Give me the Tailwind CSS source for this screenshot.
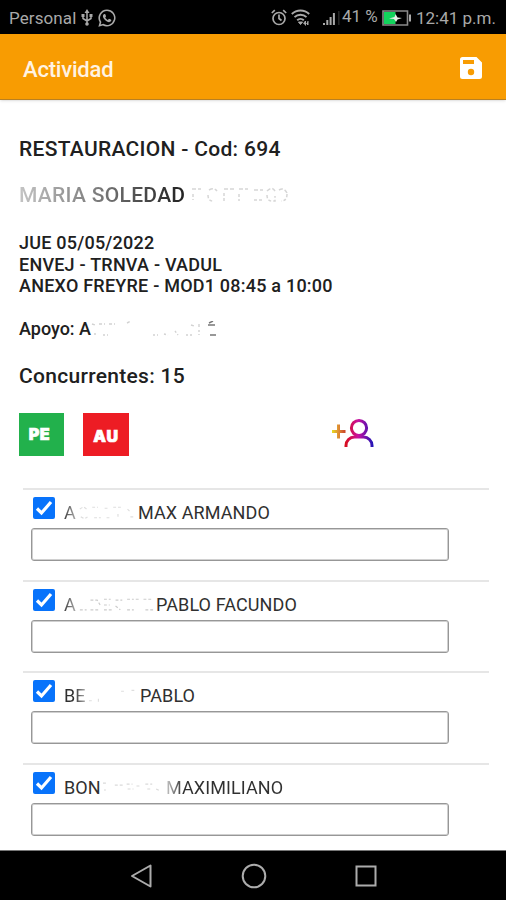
<!DOCTYPE html>
<html lang="es">
<head>
  <meta charset="UTF-8" />
  <meta name="viewport" content="width=device-width, initial-scale=1.0" />
  <title>Actividad</title>
  <script src="https://cdn.jsdelivr.net/npm/@tailwindcss/browser@4"></script>
</head>
<body class="bg-white font-['Roboto',sans-serif] text-[#202020]">
  <div class="w-[506px] h-[900px] flex flex-col overflow-hidden">

    <!-- Barra de estado -->
    <div class="h-[34px] shrink-0 bg-black text-[#a9a9a9] flex items-center pl-[9px] pr-[12px] pt-[2px] text-[17px] whitespace-nowrap">
      <span class="w-[67px] tracking-[0.1px] mt-[2px]">Personal</span>
      <svg class="w-[12px] h-[18px] ml-[5px]" viewBox="0 0 12 18" fill="none" stroke="#a9a9a9" stroke-width="1.5">
        <path d="M6 3v12M2 6v3.5l4 2.500 4-2.500V6" />
        <path d="M6 0l2.500 4h-5zM0.500 5h3v3h-3zM8.500 5h3v3h-3z" fill="#a9a9a9" stroke="none" />
        <circle cx="6" cy="15" r="1.800" fill="#a9a9a9" stroke="none" />
      </svg>
      <svg class="w-[18px] h-[18px] ml-[5px]" viewBox="0 0 24 24" fill="#a9a9a9">
        <path d="M12 0.500a11.400 11.400 0 0 0-9.800 17.200L0.500 23.500l6-1.600A11.400 11.400 0 1 0 12 0.500zm0 2.100a9.300 9.300 0 1 1-4.900 17.200l-3.500.9.900-3.400A9.300 9.300 0 0 1 12 2.600z" />
        <path d="M8.500 6.500c-.5 0-2 1-2 2.900 0 3.500 4.800 8.100 8.300 8.100 1.700 0 3-1.300 3-2.700 0-.5-2.700-1.800-3.100-1.800-.5 0-1 1.500-1.500 1.500-.7 0-3.500-2.500-3.500-3.300 0-.4 1-1.100 1-1.600 0-.6-1-3.100-1.400-3.100z" />
      </svg>
      <span class="grow"></span>
      <svg class="w-[16px] h-[17px] -mt-[2px]" viewBox="0 0 16 17" fill="none" stroke="#a9a9a9" stroke-width="1.700">
        <circle cx="8" cy="9.500" r="6" />
        <path d="M0.800 4l3-2.800M15.200 4l-3-2.800M8 5.500v4l2.500 2" />
      </svg>
      <svg class="w-[19px] h-[17px] ml-[4px] -mt-[2px]" viewBox="0 0 19 17" fill="none" stroke="#a9a9a9" stroke-width="1.900">
        <path d="M0.800 5a12.500 12.500 0 0 1 17.400 0M3.500 8.200a8.500 8.500 0 0 1 12 0M6.200 11.200a4.800 4.800 0 0 1 6.600 0" />
        <path d="M7.500 13l2 2.500 2-2.500zM12.500 14.500l2-2.500v4.500M17 12v4l-1.500-1.500" fill="#a9a9a9" stroke-width="1" />
      </svg>
      <svg class="w-[17px] h-[16px] ml-[13px] -mt-[1px]" viewBox="0 0 17 16" fill="#a9a9a9">
        <path d="M0 13h2v2H0zM3.300 10h2v5h-2zM6.600 7h2v8h-2zM9.900 3h2v12h-2z" />
        <path d="M15.500 1h.8v14h-.8z" fill="#4a4a4a" />
      </svg>
      <span class="w-[38px] ml-[2px] -mt-[2px] text-[17px]">41 %</span>
      <svg class="w-[30px] h-[16px] ml-[2px]" viewBox="0 0 30 16">
        <path d="M1 1h24.500v14H1z" fill="none" stroke="#8a8a8a" stroke-width="1.600" />
        <path d="M2 2h11.500v12H2z" fill="#12d45c" />
        <path d="M27 4.500h2v7h-2z" fill="#a9a9a9" />
        <path d="M7 8.500l5.500-1.500 1-3 2 3.500 4.500.5-4.500 1.500-1.500 2.500-2-3z" fill="#e4efe7" />
      </svg>
      <span class="w-[78px] ml-[4px] mt-[2px] text-[17px]">12:41 p.m.</span>
    </div>

    <!-- Encabezado -->
    <header class="h-[66px] shrink-0 bg-[#f89c02] border-b border-[#b98022] shadow-sm flex items-center justify-between pl-[23px] pr-[24px] pt-[5px]">
      <h1 class="text-[22px] tracking-[-0.2px] font-medium text-[#fff3e3] pt-[1px]">Actividad</h1>
      <svg class="w-[22px] h-[22px] -mt-[3px]" viewBox="0 0 22 22">
        <path d="M2.500 0H16.500L22 5.500V19.500A2.500 2.500 0 0 1 19.500 22H2.500A2.500 2.500 0 0 1 0 19.500V2.500A2.500 2.500 0 0 1 2.500 0z" fill="#fff" />
        <path d="M3 3h11v4H3z" fill="#f89c02" />
        <circle cx="11" cy="15" r="3.200" fill="#f89c02" />
      </svg>
    </header>

    <main class="h-[750px] shrink-0 pl-[19px] pt-[36px] font-medium whitespace-nowrap">
      <h2 class="h-[26px] leading-[26px] text-[21px] tracking-[0.3px]">RESTAURACION - Cod: 694</h2>

      <div class="h-[26px] mt-[20px] leading-[26px] text-[21px] flex items-center">
        <span class="w-[167px] tracking-[0.3px] bg-linear-to-r from-[#c4c4c4] via-[#777777] to-[#202020] bg-clip-text text-transparent">MARIA SOLEDAD</span>
        <svg class="w-[98px] h-[18px] ml-[5px]" viewBox="0 0 98 18" fill="none" stroke="#d6d6d6" stroke-width="1.500">
          <path d="M1 3h9M18 4q5-3 8 1M33 3h10M48 3h9M63 4h9M76 5q5-5 8 0M88 4q5-3 8 3" stroke-dasharray="4 2" />
          <path d="M2 8v6M17 9q0 6 5 6M33 7v8M48 8v7M63 14h9M76 9q0 6 5 6h3v-5M96 8q0 7-6 7" stroke-dasharray="3 2" />
        </svg>
      </div>

      <div class="mt-[24px] text-[18px] leading-[21.700px] tracking-[0.220px]">
        <p>JUE 05/05/2022</p>
        <p>ENVEJ - TRNVA - VADUL</p>
        <p>ANEXO FREYRE - MOD1 08:45 a 10:00</p>
      </div>

      <div class="h-[22px] mt-[21px] leading-[22px] text-[18px] flex items-center">
        <span class="w-[72px]">Apoyo: A</span>
        <svg class="w-[126px] h-[16px]" viewBox="0 0 126 16" fill="none" stroke="#d2d2d2" stroke-width="1.400">
          <path d="M1 3l3 1M8 3h6M18 3h6M36 2l4-2M100 4l3 1M108 3v4" stroke-dasharray="3 2" />
          <path d="M3 13h4M12 14h5M62 14h5M73 13l4 1M84 10l3 4M95 14h6M108 9v5" stroke-dasharray="2 2" />
          <path d="M118 2l4-2M117 4h7M119 14h6" stroke="#777" />
        </svg>
      </div>

      <h2 class="h-[26px] mt-[23px] leading-[26px] text-[21px] tracking-[0.3px]">Concurrentes: 15</h2>

      <div class="mt-[24px] h-[43px] flex font-['Inter',sans-serif] font-black text-white text-[16px] [-webkit-text-stroke:0.7px_white]">
        <button class="w-[45px] h-[43px] bg-[#22b14c] pb-[2px] pr-[4px] tracking-[0.7px]">PE</button>
        <button class="w-[46px] h-[43px] ml-[19px] bg-[#ed1c24] pt-[2px] tracking-[0.7px]">AU</button>
        <svg class="w-[43px] h-[30px] ml-[203px] mt-[5px]" viewBox="0 0 43 30" fill="none">
          <defs>
            <linearGradient id="mas" gradientUnits="userSpaceOnUse" x1="0" y1="0" x2="14" y2="0">
              <stop offset="0" stop-color="#e8dc20" />
              <stop offset="0.500" stop-color="#dc8735" />
              <stop offset="1" stop-color="#c83c28" />
            </linearGradient>
            <linearGradient id="persona" gradientUnits="userSpaceOnUse" x1="13" y1="0" x2="42" y2="0">
              <stop offset="0" stop-color="#d80d18" />
              <stop offset="0.450" stop-color="#c911a0" />
              <stop offset="1" stop-color="#1515b8" />
            </linearGradient>
          </defs>
          <path d="M0 13.500h13.500M6.500 6.500v14" stroke="url(#mas)" stroke-width="3" />
          <g stroke="url(#persona)" stroke-width="3">
            <circle cx="27" cy="10" r="7.600" />
            <path d="M14 29v-1.500a8.500 8.500 0 0 1 8.500-8.500h9a8.500 8.500 0 0 1 8.500 8.500V29" />
          </g>
        </svg>
      </div>

      <!-- Lista de concurrentes -->
      <ul class="mt-[32px] ml-[4px] w-[466px] text-[18px] tracking-[0.100px] font-normal text-[#303030]">
        <li class="h-[91.500px] border-t-2 border-[#e6e6e6] pl-[8px]">
          <div class="h-[38px] flex pt-[7px]">
            <svg class="w-[22px] h-[22px] ml-[2px]" viewBox="0 0 22 22"><rect width="22" height="22" rx="2" fill="#0873fb" /><path d="M4 11.500l4.500 4.500L18 5" fill="none" stroke="#fff" stroke-width="3.200" /></svg>
            <span class="ml-[9px] w-[13px] leading-[32px] bg-linear-to-r from-[#404040] to-[#bbbbbb] bg-clip-text text-transparent">A</span>
            <svg class="w-[61px] h-[14px] mt-[9px]" viewBox="0 0 64 14" fill="none" stroke="#dedede" stroke-width="1.200"><path d="M3 3q4-4 7 0M16 1h6M29 2h4M38 1h10M53 3l3 3M4 11q4 3 7 0M18 12h7M31 12h3M43 8v5M56 11h4" stroke-dasharray="3 2" /></svg>
            <span class="leading-[32px]">MAX ARMANDO</span>
          </div>
          <input type="text" class="block w-[418px] h-[33px] border border-[#979797] ring-1 ring-inset ring-[#d0d0d0] rounded-[3px]" />
        </li>
        <li class="h-[91.500px] border-t-2 border-[#e6e6e6] pl-[8px]">
          <div class="h-[38px] flex pt-[7px]">
            <svg class="w-[22px] h-[22px] ml-[2px]" viewBox="0 0 22 22"><rect width="22" height="22" rx="2" fill="#0873fb" /><path d="M4 11.500l4.500 4.500L18 5" fill="none" stroke="#fff" stroke-width="3.200" /></svg>
            <span class="ml-[9px] w-[13px] leading-[32px] bg-linear-to-r from-[#404040] to-[#bbbbbb] bg-clip-text text-transparent">A</span>
            <svg class="w-[79px] h-[14px] mt-[9px]" viewBox="0 0 82 14" fill="none" stroke="#cccccc" stroke-width="1.200"><path d="M3 12h7M14 2h7l3 5M28 1h7M40 2h7M52 1h7M61 1h5M69 1h8M14 12h8M28 7h6M28 12h8M40 8l5 4M52 12h7M71 12h8" stroke-dasharray="3 2" /></svg>
            <span class="leading-[32px]">PABLO FACUNDO</span>
          </div>
          <input type="text" class="block w-[418px] h-[33px] border border-[#979797] ring-1 ring-inset ring-[#d0d0d0] rounded-[3px]" />
        </li>
        <li class="h-[91.500px] border-t-2 border-[#e6e6e6] pl-[8px]">
          <div class="h-[38px] flex pt-[7px]">
            <svg class="w-[22px] h-[22px] ml-[2px]" viewBox="0 0 22 22"><rect width="22" height="22" rx="2" fill="#0873fb" /><path d="M4 11.500l4.500 4.500L18 5" fill="none" stroke="#fff" stroke-width="3.200" /></svg>
            <span class="ml-[9px] w-[24px] leading-[32px] bg-linear-to-r from-[#303030] from-40% to-[#cccccc] bg-clip-text text-transparent">BE</span>
            <svg class="w-[52px] h-[14px] mt-[9px]" viewBox="0 0 55 14" fill="none" stroke="#dedede" stroke-width="1.200"><path d="M1 12h4M11 10v3M35 2h5M46 1h4" stroke-dasharray="3 2" /></svg>
            <span class="leading-[32px]">PABLO</span>
          </div>
          <input type="text" class="block w-[418px] h-[33px] border border-[#979797] ring-1 ring-inset ring-[#d0d0d0] rounded-[3px]" />
        </li>
        <li class="h-[87px] border-t-2 border-[#e6e6e6] pl-[8px]">
          <div class="h-[38px] flex pt-[7px]">
            <svg class="w-[22px] h-[22px] ml-[2px]" viewBox="0 0 22 22"><rect width="22" height="22" rx="2" fill="#0873fb" /><path d="M4 11.500l4.500 4.500L18 5" fill="none" stroke="#fff" stroke-width="3.200" /></svg>
            <span class="ml-[9px] w-[38px] leading-[32px]">BON</span>
            <svg class="w-[64px] h-[14px] mt-[9px]" viewBox="0 0 65 14" fill="none" stroke="#dadada" stroke-width="1.200"><path d="M1 2h5M13 4h8M25 3h6M35 5h5M44 3h7M55 8l4 2M2 9h2M26 8h6M46 8h4" stroke-dasharray="3 2" /></svg>
            <span class="leading-[32px] bg-linear-to-r from-[#cccccc] to-[#303030] to-15% bg-clip-text text-transparent">MAXIMILIANO</span>
          </div>
          <input type="text" class="block w-[418px] h-[33px] border border-[#979797] ring-1 ring-inset ring-[#d0d0d0] rounded-[3px]" />
        </li>
      </ul>
    </main>

    <!-- Barra de navegación -->
    <nav class="h-[50px] shrink-0 bg-black border-t border-[#777777] flex items-center pl-[130px]">
      <svg class="w-[22px] h-[24px]" viewBox="0 0 22 24" fill="none" stroke="#acacac" stroke-width="2"><path d="M20.500 1.500v21L2 12z" stroke-linejoin="round" /></svg>
      <svg class="w-[26px] h-[26px] ml-[89px]" viewBox="0 0 26 26" fill="none" stroke="#acacac" stroke-width="2"><circle cx="13" cy="13" r="11.300" /></svg>
      <svg class="w-[22px] h-[22px] ml-[88px]" viewBox="0 0 22 22" fill="none" stroke="#acacac" stroke-width="2"><path d="M1.500 1.500h19v19h-19z" /></svg>
    </nav>
  </div>
</body>
</html>
